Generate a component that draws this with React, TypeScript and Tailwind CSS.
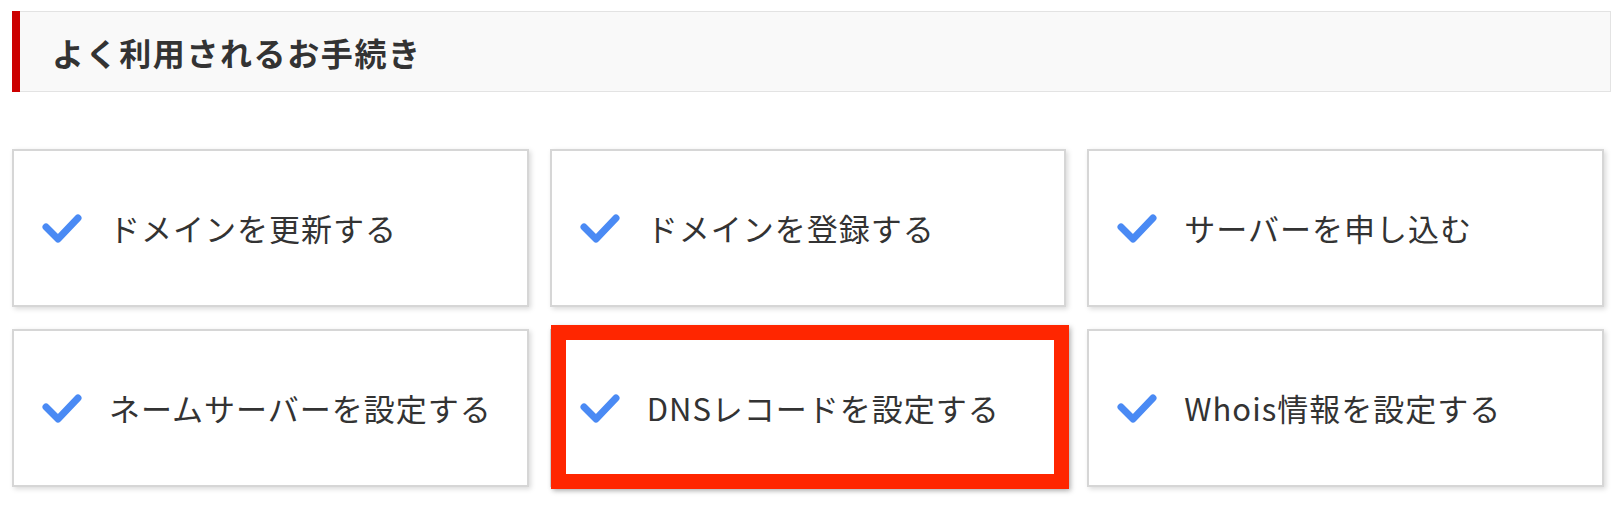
import React from 'react'

const items = [
  'ドメインを更新する',
  'ドメインを登録する',
  'サーバーを申し込む',
  'ネームサーバーを設定する',
  'DNSレコードを設定する',
  'Whois情報を設定する',
]

function Check() {
  return (
    <svg width="40" height="32" viewBox="0 0 40 32" className="shrink-0">
      <polyline
        points="4,15 16,27 36,6"
        fill="none"
        stroke="#4a8af4"
        strokeWidth="7"
        strokeLinecap="round"
        strokeLinejoin="round"
      />
    </svg>
  )
}

export default function App() {
  return (
    <div
      className="bg-white w-[1622px] h-[514px] pl-[12px] pt-[11px]"
      style={{ fontFamily: '"Noto Sans CJK JP", "Noto Sans", sans-serif' }}
    >
      {/* Section heading */}
      <div className="flex w-[1599px] h-[81px]">
        <div className="w-[8px] bg-[#cc0000]" />
        <div className="flex-1 flex items-center bg-[#f9f9f9] border border-l-0 border-[#e3e3e3] pl-[32px]">
          <h2 className="text-[32px] font-bold text-[#333] tracking-[1.6px] leading-none">
            よく利用されるお手続き
          </h2>
        </div>
      </div>

      {/* Procedure cards */}
      <div className="grid grid-cols-3 gap-x-[21px] gap-y-[22px] w-[1592px] mt-[57px]">
        {items.map((label, i) => (
          <div key={label} className="relative">
            <a
              href="#"
              className="flex items-center h-[158px] bg-white border-2 border-[#d6d6d6] shadow-[2px_2px_5px_rgba(0,0,0,0.15)] pl-[28px] gap-[27px] text-[31px] text-[#333] tracking-[1px]"
            >
              <Check />
              <span className="leading-none -mt-[2px]">{label}</span>
            </a>
            {i === 4 && (
              <div className="absolute left-[1px] right-[-3px] top-[-4px] bottom-[-2px] border-[15px] border-[#ff2600] shadow-[2px_2px_5px_rgba(0,0,0,0.25)]" />
            )}
          </div>
        ))}
      </div>
    </div>
  )
}
